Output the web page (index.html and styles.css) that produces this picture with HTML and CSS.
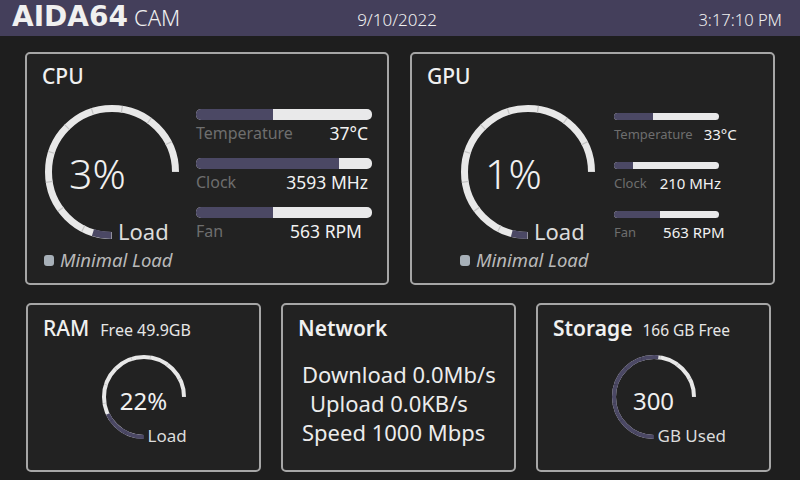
FILE: index.html
```html
<!DOCTYPE html>
<html>
   <head>
      <meta name="viewport" content="width=device-width, initial-scale=1">
      <link rel="stylesheet" href="styles.css">
   </head>
   <body>
      <header class="topbar">
        <div class="brand"><span class="brand-main">AIDA64</span><span class="brand-sub">CAM</span></div>
        <div class="clock-date">9/10/2022</div>
        <div class="clock-time">3:17:10 PM</div>
      </header>

      <main class="dash">
        <div class="row-top">
          <!-- CPU -->
          <section class="card card-big card-cpu">
            <h2 class="card-title">CPU</h2>
            <div class="card-body">
              <div class="gauge-col">
                <div class="gauge">
                  <svg class="ring" viewBox="0 0 140 140" width="140" height="140">
                    <path class="ring-track" d="M70 133.5 A63.5 63.5 0 1 1 133.5 70" pathLength="100"/>
                    <path class="ring-fill" d="M70 133.5 A63.5 63.5 0 1 1 133.5 70" pathLength="100" style="stroke-dasharray: 6.5 100"/>
                    <path class="ring-ticks" d="M70 133.5 A63.5 63.5 0 1 1 133.5 70" pathLength="100"/>
                  </svg>
                  <span class="gauge-value">3%</span>
                  <span class="gauge-label">Load</span>
                </div>
                <div class="status"><span class="status-dot"></span>Minimal Load</div>
              </div>
              <div class="stats">
                <div class="stat">
                  <div class="bar"><div class="bar-fill" style="width:44%"></div></div>
                  <div class="stat-line"><span class="stat-name">Temperature</span><span class="stat-value">37°C</span></div>
                </div>
                <div class="stat">
                  <div class="bar"><div class="bar-fill" style="width:81%"></div></div>
                  <div class="stat-line"><span class="stat-name">Clock</span><span class="stat-value">3593 MHz</span></div>
                </div>
                <div class="stat">
                  <div class="bar"><div class="bar-fill" style="width:44%"></div></div>
                  <div class="stat-line"><span class="stat-name">Fan</span><span class="stat-value stat-value-in">563 RPM</span></div>
                </div>
              </div>
            </div>
          </section>

          <!-- GPU -->
          <section class="card card-big card-gpu">
            <h2 class="card-title">GPU</h2>
            <div class="card-body">
              <div class="gauge-col">
                <div class="gauge">
                  <svg class="ring" viewBox="0 0 140 140" width="140" height="140">
                    <path class="ring-track" d="M70 133.5 A63.5 63.5 0 1 1 133.5 70" pathLength="100"/>
                    <path class="ring-fill" d="M70 133.5 A63.5 63.5 0 1 1 133.5 70" pathLength="100" style="stroke-dasharray: 5.5 100"/>
                    <path class="ring-ticks" d="M70 133.5 A63.5 63.5 0 1 1 133.5 70" pathLength="100"/>
                  </svg>
                  <span class="gauge-value">1%</span>
                  <span class="gauge-label">Load</span>
                </div>
                <div class="status"><span class="status-dot"></span>Minimal Load</div>
              </div>
              <div class="stats">
                <div class="stat">
                  <div class="bar"><div class="bar-fill" style="width:37%"></div></div>
                  <div class="stat-line"><span class="stat-name">Temperature</span><span class="stat-value gap-temp">33°C</span></div>
                </div>
                <div class="stat">
                  <div class="bar"><div class="bar-fill" style="width:18%"></div></div>
                  <div class="stat-line"><span class="stat-name">Clock</span><span class="stat-value gap-clock">210 MHz</span></div>
                </div>
                <div class="stat">
                  <div class="bar"><div class="bar-fill" style="width:44%"></div></div>
                  <div class="stat-line"><span class="stat-name">Fan</span><span class="stat-value gap-fan">563 RPM</span></div>
                </div>
              </div>
            </div>
          </section>
        </div>

        <div class="row-bottom">
          <!-- RAM -->
          <section class="card card-small">
            <div class="title-row">
              <h2 class="card-title">RAM</h2>
              <span class="card-sub">Free 49.9GB</span>
            </div>
            <div class="mini-gauge">
              <svg class="ring ring-thin" viewBox="0 0 88 88" width="88" height="88">
                <path class="ring-track" d="M44 84 A40 40 0 1 1 84 44" pathLength="100"/>
                <path class="ring-fill" d="M44 84 A40 40 0 1 1 84 44" pathLength="100" style="stroke-dasharray: 24 100"/>
                <path class="ring-ticks" d="M44 84 A40 40 0 1 1 84 44" pathLength="100"/>
              </svg>
              <span class="mini-value">22%</span>
              <span class="mini-label">Load</span>
            </div>
          </section>

          <!-- Network -->
          <section class="card card-small">
            <div class="title-row">
              <h2 class="card-title card-title-strong">Network</h2>
            </div>
            <div class="net-lines">
              <div>Download 0.0Mb/s</div>
              <div class="net-indent">Upload 0.0KB/s</div>
              <div>Speed 1000 Mbps</div>
            </div>
          </section>

          <!-- Storage -->
          <section class="card card-small">
            <div class="title-row">
              <h2 class="card-title card-title-strong">Storage</h2>
              <span class="card-sub card-sub-narrow">166 GB Free</span>
            </div>
            <div class="mini-gauge">
              <svg class="ring ring-thin" viewBox="0 0 88 88" width="88" height="88">
                <path class="ring-track" d="M44 84 A40 40 0 1 1 84 44" pathLength="100"/>
                <path class="ring-fill" d="M44 84 A40 40 0 1 1 84 44" pathLength="100" style="stroke-dasharray: 69 100"/>
                <path class="ring-ticks" d="M44 84 A40 40 0 1 1 84 44" pathLength="100"/>
              </svg>
              <span class="mini-value mini-value-big">300</span>
              <span class="mini-label">GB Used</span>
            </div>
          </section>
        </div>
      </main>
   </body>
</html>
```

FILE: styles.css
```css
body {
	margin: 0;
	width: 800px;
	height: 480px;
	overflow: hidden;
	background-color: #1e1e1e;
	color: #f0f0f0;
	font-family: "Noto Sans", "DejaVu Sans", sans-serif;
}

/* header bar */
.topbar {
	height: 36px;
	background-color: #443f5b;
	display: grid;
	grid-template-columns: 1fr auto 1fr;
	align-items: baseline;
	padding: 0 18px 0 12px;
}

.brand-main {
	font-family: "DejaVu Sans", sans-serif;
	font-size: 28px;
	font-weight: bold;
	line-height: 34px;
}

.brand-sub {
	font-size: 22px;
	font-weight: 300;
	margin-left: 6px;
}

.clock-date {
	font-size: 17px;
	font-weight: 300;
}

.clock-time {
	font-size: 16.5px;
	font-weight: 300;
	text-align: right;
}

/* card grid */
.row-top {
	display: grid;
	grid-template-columns: 364px 365px;
	grid-template-rows: 233px;
	column-gap: 21px;
	margin: 16px 0 0 25px;
}

.row-bottom {
	display: grid;
	grid-template-columns: 235px 235px 235px;
	grid-template-rows: 169px;
	column-gap: 20px;
	margin: 18px 0 0 26px;
}

.card {
	box-sizing: border-box;
	border: 2px solid #a6a6a6;
	border-radius: 5px;
	background-color: #222222;
	padding: 10px 15px 0 15px;
}

.card-small {
	padding-top: 11px;
}

.card-title {
	margin: 0;
	font-size: 21px;
	font-weight: 500;
	line-height: 24px;
}

.card-title-strong {
	font-weight: 600;
}

.card-body {
	display: flex;
}

/* big ring gauges */
.gauge-col {
	width: 154px;
	flex-shrink: 0;
}

.card-gpu .gauge-col {
	width: 156px;
	padding-left: 31px;
}

.gauge {
	position: relative;
	width: 140px;
	height: 140px;
	margin-top: 14px;
}

.ring {
	display: block;
}

.ring path {
	fill: none;
	stroke-width: 7;
}

.ring-thin path {
	stroke-width: 4;
}

.ring-track {
	stroke: #e8e8e8;
}

.ring-fill {
	stroke: #4b4864;
}

.ring-ticks {
	stroke: #c4c4c4;
	stroke-dasharray: 0.4 9.6;
	stroke-dashoffset: 0.2;
}

.ring-thin .ring-ticks {
	stroke: rgba(0, 0, 0, 0.15);
}

.gauge-value {
	position: absolute;
	left: 27px;
	top: 51px;
	font-size: 41px;
	font-weight: 300;
	line-height: 1;
}

.gauge-label {
	position: absolute;
	left: 76px;
	top: 118px;
	font-size: 22px;
	line-height: 1;
	color: #dcdcdc;
}

.status {
	display: flex;
	align-items: center;
	gap: 6px;
	margin-top: 8px;
	padding-left: 2px;
	font-size: 18.5px;
	font-style: italic;
	line-height: 20px;
	color: #b9b9b9;
}

.status-dot {
	width: 10px;
	height: 11px;
	border-radius: 3px;
	background-color: #a7b0b8;
}

/* bars */
.stats {
	flex: 1;
	margin-top: 21px;
}

.stat {
	margin-bottom: 14px;
}

.bar {
	height: 11px;
	border-radius: 5px;
	background-color: #e9e9ea;
	overflow: hidden;
}

.bar-fill {
	height: 100%;
	background-color: #4b4864;
}

.stat-line {
	display: flex;
	justify-content: space-between;
	margin-top: 2px;
	padding-right: 4px;
	line-height: 22px;
}

.stat-name {
	font-size: 16px;
	color: #6e6e6e;
}

.stat-value {
	font-size: 17.5px;
	color: #f2f2f2;
}

.stat-value-in {
	margin-right: 6px;
}

.card-gpu .stats {
	flex: none;
	width: 105px;
	margin-top: 25px;
}

.card-gpu .stat {
	margin-bottom: 18px;
}

.card-gpu .bar {
	height: 7px;
	border-radius: 4px;
}

.card-gpu .stat-line {
	justify-content: flex-start;
	margin-top: 4px;
	padding-right: 0;
	line-height: 20px;
	white-space: nowrap;
}

.card-gpu .stat-name {
	font-size: 13px;
}

.card-gpu .stat-value {
	font-size: 15px;
}

.gap-temp {
	margin-left: 11px;
}

.gap-clock {
	margin-left: 13px;
}

.gap-fan {
	margin-left: 27px;
}

/* small cards */
.title-row {
	display: flex;
	align-items: baseline;
	gap: 11px;
}

.card-sub {
	font-size: 16px;
	color: #e6e6e6;
}

.card-sub-narrow {
	font-size: 15.5px;
	margin-left: -1px;
}

.mini-gauge {
	position: relative;
	width: 88px;
	height: 88px;
	margin: 12px auto 0 auto;
}

.mini-value {
	position: absolute;
	left: 0;
	right: 0;
	top: 36px;
	text-align: center;
	font-size: 24px;
	line-height: 1;
}

.mini-label {
	position: absolute;
	left: 48px;
	top: 74px;
	font-size: 17px;
	line-height: 1;
	color: #dcdcdc;
	white-space: nowrap;
}

.net-lines {
	margin-top: 20px;
	padding-left: 4px;
	font-size: 22px;
	line-height: 29px;
	color: #ececec;
}

.net-indent {
	padding-left: 8px;
}
```
